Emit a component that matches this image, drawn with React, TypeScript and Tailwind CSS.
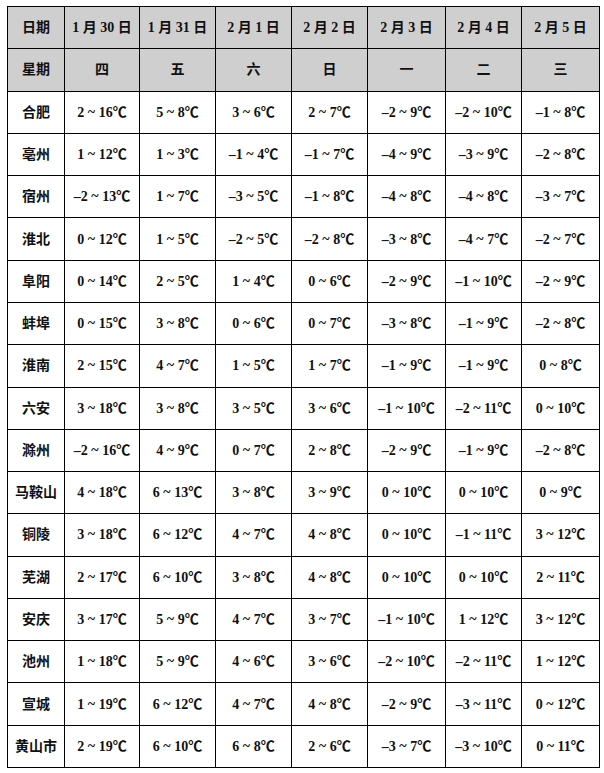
const dates = ["1 月 30 日", "1 月 31 日", "2 月 1 日", "2 月 2 日", "2 月 3 日", "2 月 4 日", "2 月 5 日"];
const weekdays = ["四", "五", "六", "日", "一", "二", "三"];

// city, then min/max per day
const rows: [string, [number, number][]][] = [
  ["合肥", [[2, 16], [5, 8], [3, 6], [2, 7], [-2, 9], [-2, 10], [-1, 8]]],
  ["亳州", [[1, 12], [1, 3], [-1, 4], [-1, 7], [-4, 9], [-3, 9], [-2, 8]]],
  ["宿州", [[-2, 13], [1, 7], [-3, 5], [-1, 8], [-4, 8], [-4, 8], [-3, 7]]],
  ["淮北", [[0, 12], [1, 5], [-2, 5], [-2, 8], [-3, 8], [-4, 7], [-2, 7]]],
  ["阜阳", [[0, 14], [2, 5], [1, 4], [0, 6], [-2, 9], [-1, 10], [-2, 9]]],
  ["蚌埠", [[0, 15], [3, 8], [0, 6], [0, 7], [-3, 8], [-1, 9], [-2, 8]]],
  ["淮南", [[2, 15], [4, 7], [1, 5], [1, 7], [-1, 9], [-1, 9], [0, 8]]],
  ["六安", [[3, 18], [3, 8], [3, 5], [3, 6], [-1, 10], [-2, 11], [0, 10]]],
  ["滁州", [[-2, 16], [4, 9], [0, 7], [2, 8], [-2, 9], [-1, 9], [-2, 8]]],
  ["马鞍山", [[4, 18], [6, 13], [3, 8], [3, 9], [0, 10], [0, 10], [0, 9]]],
  ["铜陵", [[3, 18], [6, 12], [4, 7], [4, 8], [0, 10], [-1, 11], [3, 12]]],
  ["芜湖", [[2, 17], [6, 10], [3, 8], [4, 8], [0, 10], [0, 10], [2, 11]]],
  ["安庆", [[3, 17], [5, 9], [4, 7], [3, 7], [-1, 10], [1, 12], [3, 12]]],
  ["池州", [[1, 18], [5, 9], [4, 6], [3, 6], [-2, 10], [-2, 11], [1, 12]]],
  ["宣城", [[1, 19], [6, 12], [4, 7], [4, 8], [-2, 9], [-3, 11], [0, 12]]],
  ["黄山市", [[2, 19], [6, 10], [6, 8], [2, 6], [-3, 7], [-3, 10], [0, 11]]],
];

const fmt = (n: number) => (n < 0 ? `–${-n}` : `${n}`);

function Cell({ children, head }: { children: React.ReactNode; head?: boolean }) {
  return (
    <div
      className={`flex items-center justify-center font-bold text-[14px] text-[#111] ${
        head ? "bg-[#cfcfcf]" : "bg-white"
      }`}
    >
      {children}
    </div>
  );
}

export default function App() {
  return (
    <div
      className="w-[604px] h-[773px] bg-white pt-[6px] pl-[7px]"
      style={{ fontFamily: '"Liberation Serif", "Noto Sans CJK SC", serif' }}
    >
      <div className="grid w-[593px] h-[762px] gap-px p-px bg-black grid-cols-[56px_74px_75px_75px_75px_77px_75px_77px] grid-rows-[repeat(18,minmax(0,1fr))]">
        <Cell head>日期</Cell>
        {dates.map((d) => (
          <Cell head key={d}>{d}</Cell>
        ))}
        <Cell head>星期</Cell>
        {weekdays.map((w) => (
          <Cell head key={w}>{w}</Cell>
        ))}
        {rows.map(([city, temps]) => (
          <>
            <Cell key={city}>{city}</Cell>
            {temps.map(([lo, hi], i) => (
              <Cell key={city + i}>
                {fmt(lo)} ~ {hi}℃
              </Cell>
            ))}
          </>
        ))}
      </div>
    </div>
  );
}
